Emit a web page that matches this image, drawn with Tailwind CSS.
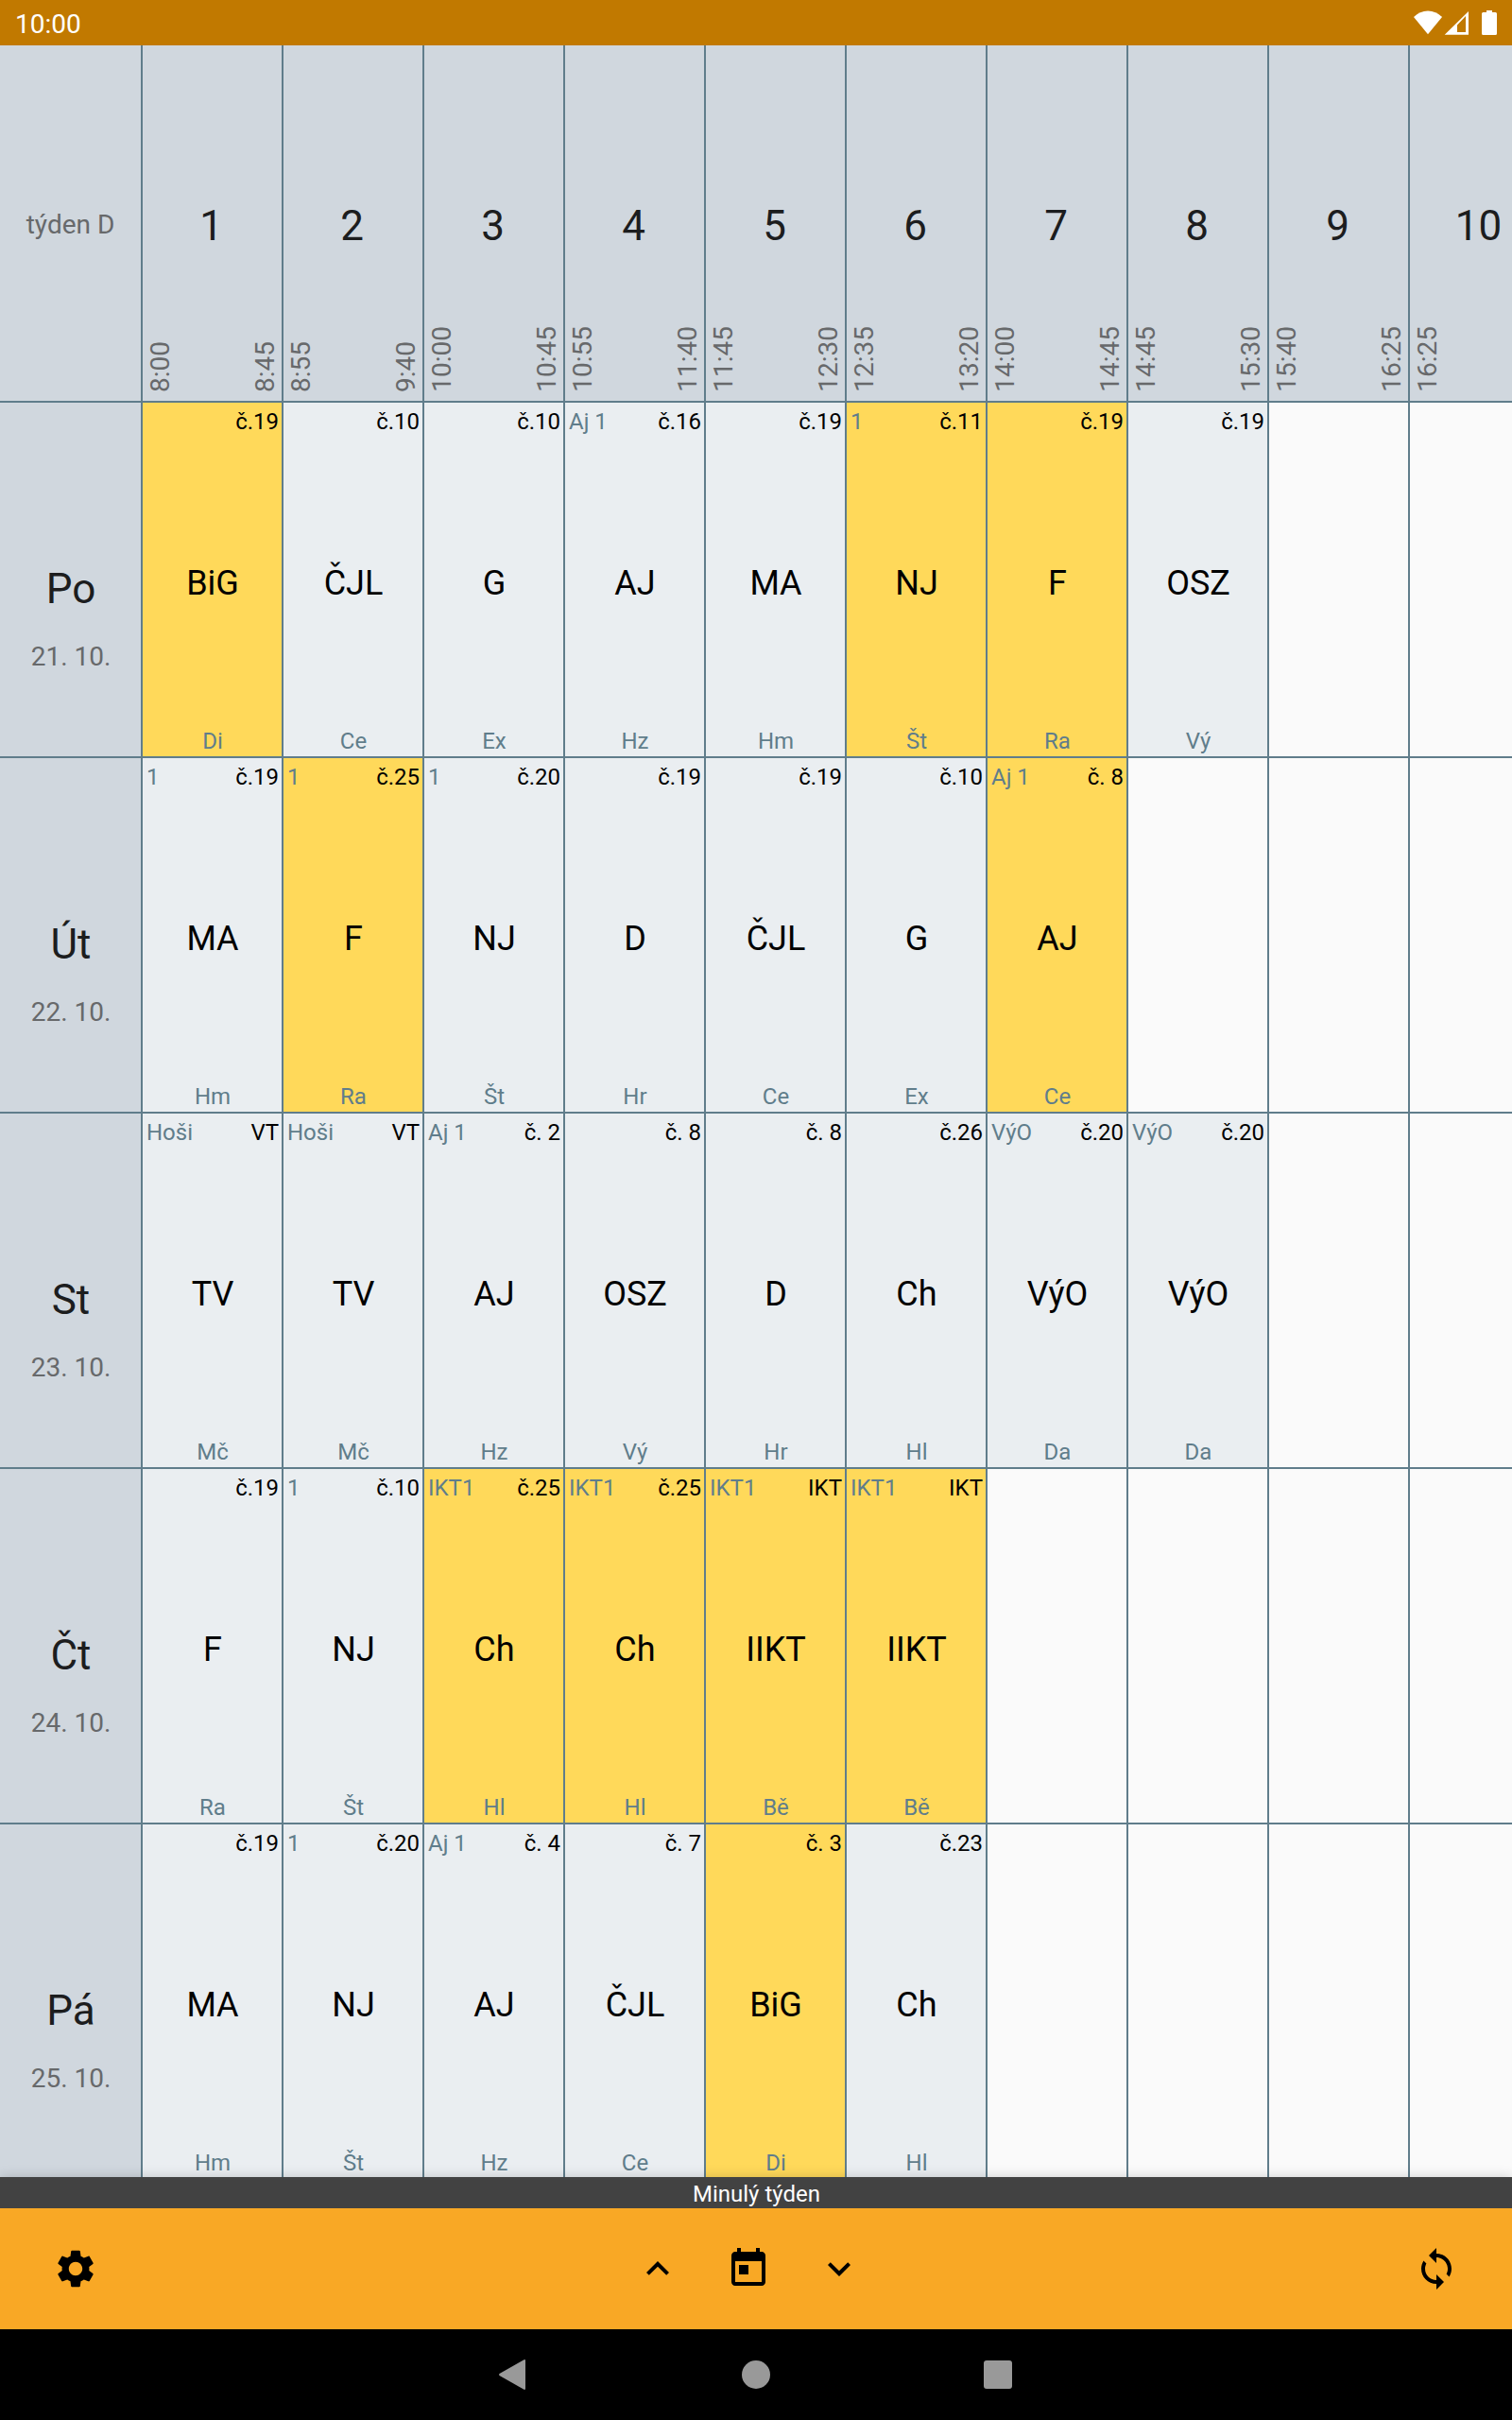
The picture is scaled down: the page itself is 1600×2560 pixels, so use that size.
<!DOCTYPE html>
<html lang="cs">
<head>
<meta charset="utf-8">
<title>Rozvrh</title>
<script src="https://cdn.jsdelivr.net/npm/@tailwindcss/browser@4"></script>
</head>
<body class="w-[1600px] h-[2560px] overflow-hidden flex flex-col bg-[#fafafa] font-[Roboto,sans-serif] text-black">
<header class="h-12 shrink-0 bg-[#c17900] text-white flex items-center justify-between pl-4 pr-4">
  <span class="text-[28px] leading-[33px] pt-[3px]">10:00</span>
  <svg class="w-[88px] h-12" viewBox="1496 0 88 48" fill="#fff">
    <path d="M1511 36.2 1496 18Q1502.500 11.500 1511 11.500T1526 18Z"/>
    <path fill-rule="evenodd" d="M1554 12V36.700H1528.700ZM1551 17 1542 26.500V34H1551Z"/>
    <path d="M1573 11h6v2h3.500q1.500 0 1.500 1.500v21q0 1.500-1.500 1.500h-13q-1.500 0-1.500-1.500v-21q0-1.500 1.500-1.500h3.500z"/>
  </svg>
</header>

<main class="h-[2255px] shrink-0 overflow-hidden">
  <div id="timetable" class="grid grid-cols-[repeat(11,149px)] auto-rows-[376px]"></div>
</main>

<footer class="relative shrink-0">
  <div class="shadow-[0_0_12px_rgba(0,0,0,0.18)]">
    <div class="h-[33px] bg-[#424242] text-white text-2xl leading-9 text-center pl-px">Minulý týden</div>
    <div class="h-32 bg-[#f9a825] flex items-center justify-between px-14">
      <svg class="size-12" viewBox="0 0 24 24"><path d="M19.140 12.940c.04-.3.06-.61.06-.94 0-.32-.02-.64-.07-.94l2.030-1.580c.18-.14.23-.41.12-.61l-1.920-3.320c-.12-.22-.37-.29-.59-.22l-2.390.96c-.5-.38-1.030-.7-1.620-.94l-.36-2.540c-.04-.24-.24-.41-.48-.41h-3.840c-.24 0-.43.17-.47.41l-.36 2.540c-.59.24-1.130.57-1.620.94l-2.390-.96c-.22-.08-.47 0-.59.22L2.740 8.870c-.12.21-.08.47.12.61l2.030 1.580c-.05.3-.09.63-.09.94s.02.64.07.94l-2.030 1.580c-.18.14-.23.41-.12.61l1.920 3.320c.12.22.37.29.59.22l2.390-.96c.5.38 1.030.7 1.620.94l.36 2.540c.05.24.24.41.48.41h3.840c.24 0 .44-.17.47-.41l.36-2.540c.59-.24 1.130-.56 1.620-.94l2.390.96c.22.08.47 0 .59-.22l1.920-3.320c.12-.22.07-.47-.12-.61l-2.010-1.580zM12 15.600c-1.980 0-3.600-1.620-3.600-3.600s1.620-3.600 3.600-3.600 3.600 1.620 3.600 3.600-1.620 3.600-3.600 3.600z"/></svg>
      <div class="flex gap-12 mr-4">
        <svg class="size-12" viewBox="0 0 24 24"><path d="M7.410 15.410 12 10.830l4.590 4.580L18 14l-6-6-6 6z"/></svg>
        <svg class="size-12" viewBox="0 0 24 24"><path d="M19 3h-1V1h-2v2H8V1H6v2H5c-1.110 0-1.990.9-1.990 2L3 19c0 1.100.89 2 2 2h14c1.100 0 2-.9 2-2V5c0-1.100-.9-2-2-2zm0 16H5V8h14v11zM7 10h5v5H7z"/></svg>
        <svg class="size-12" viewBox="0 0 24 24"><path d="M7.410 8.590 12 13.170l4.590-4.580L18 10l-6 6-6-6z"/></svg>
      </div>
      <svg class="size-12" viewBox="0 0 24 24"><path d="M12 4V1L8 5l4 4V6c3.310 0 6 2.690 6 6 0 1.010-.25 1.970-.7 2.800l1.460 1.460C19.540 15.030 20 13.570 20 12c0-4.420-3.580-8-8-8zm0 14c-3.310 0-6-2.690-6-6 0-1.010.25-1.970.7-2.800L5.240 7.740C4.460 8.970 4 10.430 4 12c0 4.420 3.580 8 8 8v3l4-4-4-4v3z"/></svg>
    </div>
  </div>
  <nav class="relative h-24 bg-black flex items-center justify-center gap-[226px]">
    <svg class="w-[30px] h-8 overflow-visible" viewBox="2 0 30 32" fill="#999"><path d="M27.500.3Q29-.5 29 1.500v29q0 2-1.500 1.200L1.500 17Q.5 16 1.500 15Z"/></svg>
    <div class="size-[30px] rounded-full bg-[#999]"></div>
    <div class="size-[30px] rounded-[3px] bg-[#999]"></div>
  </nav>
</footer>

<script>
  const hours = [
    ['8:00', '8:45'], ['8:55', '9:40'], ['10:00', '10:45'], ['10:55', '11:40'], ['11:45', '12:30'],
    ['12:35', '13:20'], ['14:00', '14:45'], ['14:45', '15:30'], ['15:40', '16:25'], ['16:25', '']
  ];
  // Lesson: group | room | subject | teacher | "*" when changed
  const days = [
    ['Po', '21. 10.', ['|č.19|BiG|Di|*', '|č.10|ČJL|Ce', '|č.10|G|Ex', 'Aj 1|č.16|AJ|Hz', '|č.19|MA|Hm', '1|č.11|NJ|Št|*', '|č.19|F|Ra|*', '|č.19|OSZ|Vý']],
    ['Út', '22. 10.', ['1|č.19|MA|Hm', '1|č.25|F|Ra|*', '1|č.20|NJ|Št', '|č.19|D|Hr', '|č.19|ČJL|Ce', '|č.10|G|Ex', 'Aj 1|č. 8|AJ|Ce|*']],
    ['St', '23. 10.', ['Hoši|VT|TV|Mč', 'Hoši|VT|TV|Mč', 'Aj 1|č. 2|AJ|Hz', '|č. 8|OSZ|Vý', '|č. 8|D|Hr', '|č.26|Ch|Hl', 'VýO|č.20|VýO|Da', 'VýO|č.20|VýO|Da']],
    ['Čt', '24. 10.', ['|č.19|F|Ra', '1|č.10|NJ|Št', 'IKT1|č.25|Ch|Hl|*', 'IKT1|č.25|Ch|Hl|*', 'IKT1|IKT|IIKT|Bě|*', 'IKT1|IKT|IIKT|Bě|*']],
    ['Pá', '25. 10.', ['|č.19|MA|Hm', '1|č.20|NJ|Št', 'Aj 1|č. 4|AJ|Hz', '|č. 7|ČJL|Ce', '|č. 3|BiG|Di|*', '|č.23|Ch|Hl']]
  ];
  const time = t => `<span class="[writing-mode:vertical-rl] rotate-180 leading-[33px]">${t}</span>`;
  let html = '<div class="bg-[#d0d7de] text-[28px] text-[#67696b] flex items-center justify-center pt-[3px]">týden D</div>';
  hours.forEach(([from, to], i) => {
    html += `<div class="bg-[#d0d7de] border-l-2 border-[#607d8b] grid">
      <div class="[grid-area:1/1] flex items-center justify-center pt-1.5 pr-0.5 text-[44px] text-[#1c1d1e]">${i + 1}</div>
      <div class="[grid-area:1/1] flex items-end justify-between pl-0.5 pr-px pb-[9px] text-[28px] text-[#67696b]">${time(from)}${time(to)}</div>
    </div>`;
  });
  for (const [name, date, lessons] of days) {
    html += `<div class="bg-[#d0d7de] border-t-2 border-[#607d8b] flex flex-col items-center gap-[29px] pt-[171px] pl-px">
      <div class="text-[44px] leading-[52px] text-[#1c1d1e]">${name}</div>
      <div class="text-[28px] leading-[33px] text-[#67696b]">${date}</div>
    </div>`;
    for (let i = 0; i < 10; i++) {
      if (!lessons[i]) {
        html += '<div class="border-l-2 border-t-2 border-[#607d8b]"></div>';
        continue;
      }
      const [group, room, subject, teacher, changed] = lessons[i].split('|');
      html += `<div class="${changed ? 'bg-[#ffd95a]' : 'bg-[#eaeef1]'} border-l-2 border-t-2 border-[#607d8b] flex flex-col pt-1.5 pb-0.5 text-2xl leading-7">
        <div class="flex justify-between pl-1 pr-[3px] leading-7"><span class="text-[#607d8b]">${group}</span><span>${room}</span></div>
        <div class="flex-1 flex items-center justify-center pt-[3px] pl-px text-4xl">${subject}</div>
        <div class="text-center pl-px leading-7 text-[#607d8b]">${teacher}</div>
      </div>`;
    }
  }
  document.getElementById('timetable').innerHTML = html;
</script>
</body>
</html>
